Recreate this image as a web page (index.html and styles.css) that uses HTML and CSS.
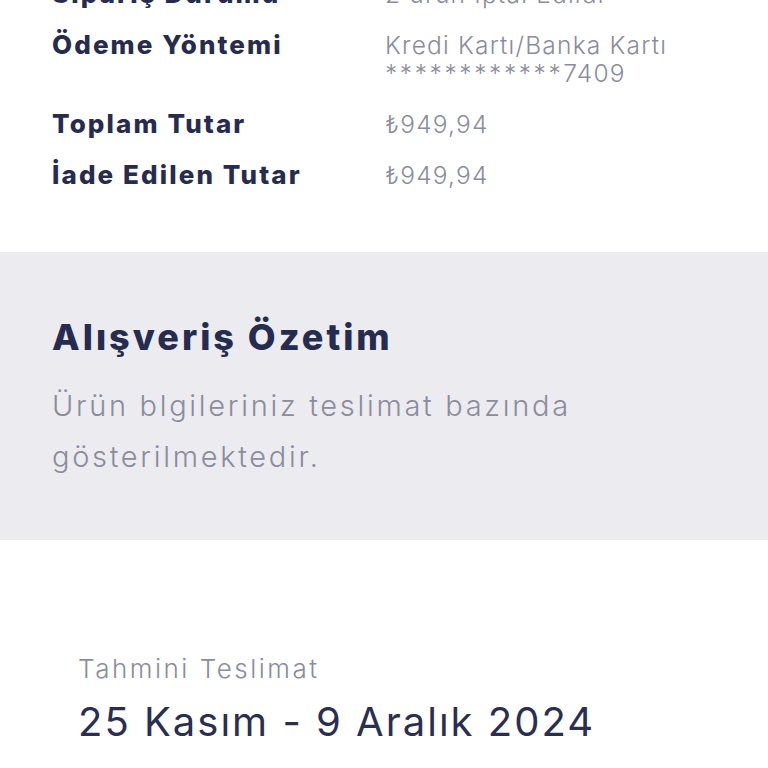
FILE: index.html
```html
<!DOCTYPE html>
<html lang="tr">
<head>
<meta charset="utf-8">
<link rel="stylesheet" href="styles.css">
</head>
<body>
<div class="page">
  <section class="details">
    <div class="row">
      <div class="label">Sipariş Durumu</div>
      <div class="value">2 ürün İptal Edildi</div>
    </div>
    <div class="row">
      <div class="label">Ödeme Yöntemi</div>
      <div class="value">Kredi Kartı/Banka Kartı<br><span class="mask">************</span>7409</div>
    </div>
    <div class="row">
      <div class="label">Toplam Tutar</div>
      <div class="value">₺949,94</div>
    </div>
    <div class="row">
      <div class="label">İade Edilen Tutar</div>
      <div class="value">₺949,94</div>
    </div>
  </section>
  <section class="summary">
    <h2 class="summary-title">Alışveriş Özetim</h2>
    <p class="summary-text">Ürün blgileriniz teslimat bazında gösterilmektedir.</p>
  </section>
  <section class="delivery">
    <div class="delivery-label">Tahmini Teslimat</div>
    <div class="delivery-date">25 Kasım - 9 Aralık 2024</div>
  </section>
</div>
</body>
</html>
```
FILE: styles.css
```css
html, body {
  margin: 0;
  padding: 0;
  background: #ffffff;
}
body {
  font-family: Inter, "Noto Sans", sans-serif;
  color: #2a2e52;
  overflow: hidden;
  height: 768px;
}
.page {
  width: 768px;
}
.details {
  margin-top: -20px;
  padding: 0 0 0 52px;
  display: flex;
  flex-direction: column;
  gap: 23px;
  height: 272px;
  box-sizing: border-box;
}
.row {
  display: flex;
}
.label {
  width: 333px;
  flex: none;
  font-size: 26px;
  line-height: 28px;
  font-weight: 800;
  letter-spacing: 2.1px;
  color: #272c4f;
}
.value {
  font-size: 24.5px;
  line-height: 28px;
  font-weight: 300;
  letter-spacing: 1.2px;
  color: #8b8c9c;
}
.mask {
  letter-spacing: 2.6px;
}
.summary {
  background: #ebebf0;
  padding: 63px 52px 58px;
}
.summary-title {
  margin: 0;
  font-size: 36px;
  line-height: 44px;
  font-weight: 800;
  letter-spacing: 3px;
  color: #262b50;
}
.summary-text {
  margin: 21px 0 0;
  width: 600px;
  font-size: 29px;
  line-height: 51px;
  font-weight: 300;
  letter-spacing: 2.7px;
  color: #8b8c9c;
}
.delivery {
  padding: 113px 78px 0;
}
.delivery-label {
  font-size: 26px;
  line-height: 32px;
  font-weight: 300;
  letter-spacing: 2.5px;
  color: #8b8c9c;
}
.delivery-date {
  margin-top: 13px;
  font-size: 40px;
  line-height: 48px;
  font-weight: 400;
  letter-spacing: 2px;
  color: #2a2e52;
}
```
